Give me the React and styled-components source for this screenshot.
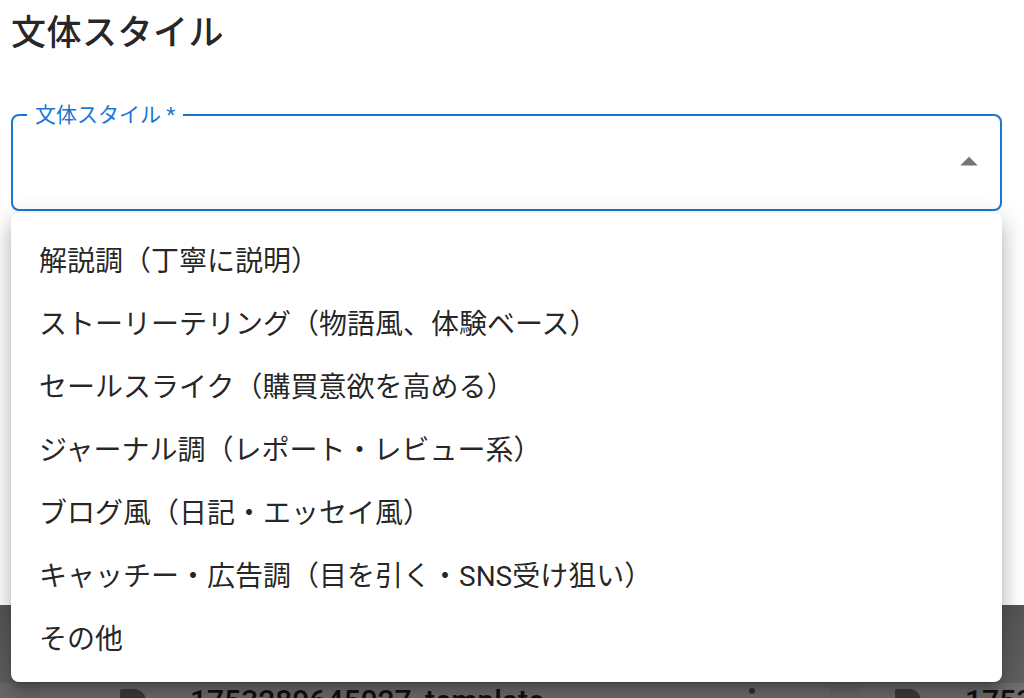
import React from "react";
import styled, { createGlobalStyle } from "styled-components";

const GlobalStyle = createGlobalStyle`
  html, body {
    margin: 0;
    padding: 0;
    background: #fff;
  }
  body {
    font-family: "Roboto", "Noto Sans CJK JP", sans-serif;
    color: rgba(0, 0, 0, 0.87);
  }
`;

const Page = styled.div`
  position: relative;
  width: 1024px;
  height: 698px;
  overflow: hidden;
`;

const Dialog = styled.div`
  background: #fff;
  height: 605px;
  padding: 0 22px 0 11px;
  box-sizing: border-box;
`;

const Title = styled.h2`
  margin: 0;
  padding: 10px 0 0 0;
  font-size: 35px;
  font-weight: 500;
  line-height: 48px;
  letter-spacing: 0.5px;
`;

const Field = styled.div`
  position: relative;
  margin-top: 57px;
  height: 96px;
`;

const Outline = styled.fieldset`
  position: absolute;
  inset: 0;
  margin: 0;
  padding: 0 14px;
  border: 2.5px solid #1976d2;
  border-radius: 8px;
  top: -11px;
  height: 107px;
  box-sizing: border-box;
`;

const Legend = styled.legend`
  padding: 0 8px;
  font-size: 21px;
  line-height: 22px;
  color: #1976d2;
  white-space: nowrap;
`;

const Arrow = styled.svg`
  position: absolute;
  right: 12px;
  top: 26px;
  width: 42px;
  height: 42px;
  fill: rgba(0, 0, 0, 0.54);
`;

const Backdrop = styled.div`
  height: 93px;
  background: linear-gradient(#555 0%, #5d5d5d 60%, #626262 100%);
  display: flex;
  flex-direction: column;
  justify-content: flex-end;
`;

const CardRow = styled.div`
  height: 15px;
  display: flex;
  gap: 30px;
  padding-left: 40px;
  background: #6a6a6a;
  overflow: hidden;
`;

const Card = styled.div`
  display: flex;
  align-items: flex-start;
  flex-shrink: 0;
  width: ${(p) => p.w}px;
  background: #6e6e6e;
  padding-left: ${(p) => p.pad}px;
  gap: 44px;
  box-sizing: border-box;
`;

const FileIcon = styled.div`
  width: 26px;
  height: 30px;
  margin-top: 6px;
  background: #3c3c3c;
  border-radius: 2px 12px 2px 2px;
  flex-shrink: 0;
`;

const CardName = styled.span`
  font-size: 30px;
  font-weight: 500;
  line-height: 30px;
  margin-top: 3px;
  color: #111;
  white-space: nowrap;
  flex: 1;
`;

const Dots = styled.span`
  width: 6px;
  height: 6px;
  margin: 5px 75px 0 0;
  border-radius: 50%;
  background: #333;
`;

const Menu = styled.ul`
  position: absolute;
  left: 11px;
  top: 213px;
  width: 991px;
  margin: 0;
  padding: 17px 0 11px;
  list-style: none;
  background: #fff;
  border-radius: 8px;
  box-shadow: 0px 9px 9px -5px rgba(0, 0, 0, 0.2),
    0px 14px 17px 2px rgba(0, 0, 0, 0.14),
    0px 5px 24px 4px rgba(0, 0, 0, 0.12);
`;

const Item = styled.li`
  height: 63px;
  padding: 0 28px;
  display: flex;
  align-items: center;
  font-size: 28px;
  line-height: 1.5;
  color: rgba(0, 0, 0, 0.87);
  white-space: nowrap;
`;

const options = [
  "解説調（丁寧に説明）",
  "ストーリーテリング（物語風、体験ベース）",
  "セールスライク（購買意欲を高める）",
  "ジャーナル調（レポート・レビュー系）",
  "ブログ風（日記・エッセイ風）",
  "キャッチー・広告調（目を引く・SNS受け狙い）",
  "その他",
];

export default function App() {
  return (
    <Page>
      <GlobalStyle />
      <Dialog>
        <Title>文体スタイル</Title>
        <Field>
          <Outline>
            <Legend>文体スタイル *</Legend>
          </Outline>
          <Arrow viewBox="0 0 24 24">
            <path d="M7 14l5-5 5 5z" />
          </Arrow>
        </Field>
      </Dialog>
      <Backdrop>
        <CardRow>
          <Card w={790} pad={80}>
            <FileIcon />
            <CardName>1753289645027_template</CardName>
            <Dots />
          </Card>
          <Card w={300} pad={35}>
            <FileIcon />
            <CardName>1753289645027_template</CardName>
          </Card>
        </CardRow>
      </Backdrop>
      <Menu>
        {options.map((o) => (
          <Item key={o}>{o}</Item>
        ))}
      </Menu>
    </Page>
  );
}
